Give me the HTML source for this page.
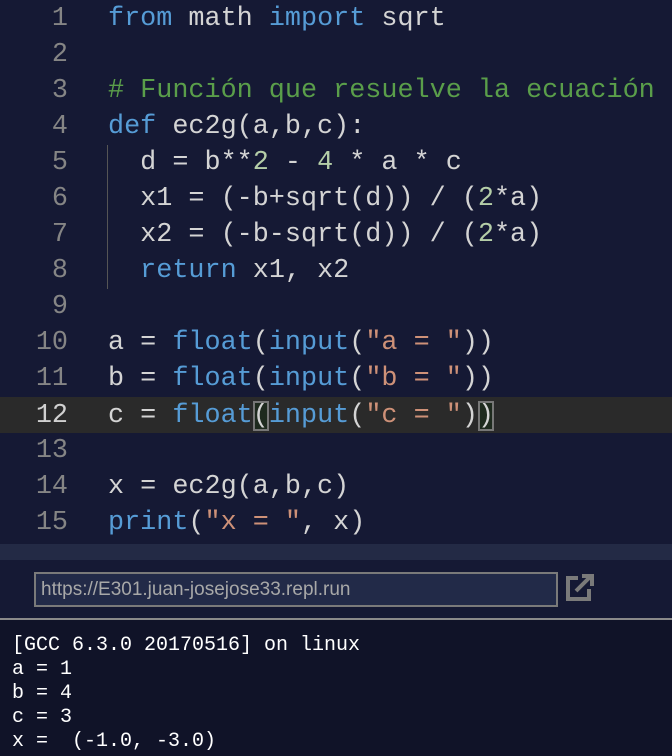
<!DOCTYPE html>
<html><head><meta charset="utf-8"><style>
body{margin:0;width:672px;height:756px;overflow:hidden;background:#101328;font-family:"Liberation Mono",monospace}
#ed{position:absolute;left:0;top:0;width:672px;height:544px;background:#151934}
.l{position:absolute;left:0;height:36px;line-height:38px;font-size:26.8px;color:#d4d4d4;white-space:pre;width:672px}
.n{position:absolute;left:0;width:68px;text-align:right;color:#858585}
.c{position:absolute;left:108px}
.k{color:#569cd6}.s{color:#ce9178}.g{color:#5a9e4a}.m{color:#b5cea8}
.hl{background:#2a2a2a}.hl .n{color:#d0d0d0}
.br{outline:2px solid #777;outline-offset:-2px;background:#1e2a1e}
#band{position:absolute;top:544px;left:0;width:672px;height:16px;background:#232a45}
#bar{position:absolute;top:560px;left:0;width:672px;height:58px;background:#151934}
#url{position:absolute;left:34px;top:572px;width:515px;height:31px;border:2px solid #7a7a7a;background:#222a48;color:#a8a8a8;font:19px "Liberation Sans",sans-serif;line-height:31px;padding-left:5px;box-sizing:content-box}
#sep{position:absolute;top:618px;left:0;width:672px;height:2px;background:#8a8a8a}
#con{position:absolute;top:634px;left:12px;color:#fff;font-size:20px;line-height:24px;white-space:pre}
#guide{position:absolute;left:107px;top:145px;width:1px;height:144px;background:#555}
</style></head><body>
<div id="ed">
<div class="l" style="top:0"><span class="n">1</span><span class="c"><span class="k">from</span> math <span class="k">import</span> sqrt</span></div>
<div class="l" style="top:36px"><span class="n">2</span></div>
<div class="l" style="top:72px"><span class="n">3</span><span class="c g"># Función que resuelve la ecuación</span></div>
<div class="l" style="top:108px"><span class="n">4</span><span class="c"><span class="k">def</span> ec2g(a,b,c):</span></div>
<div class="l" style="top:144px"><span class="n">5</span><span class="c">  d = b**<span class="m">2</span> - <span class="m">4</span> * a * c</span></div>
<div class="l" style="top:180px"><span class="n">6</span><span class="c">  x1 = (-b+sqrt(d)) / (<span class="m">2</span>*a)</span></div>
<div class="l" style="top:216px"><span class="n">7</span><span class="c">  x2 = (-b-sqrt(d)) / (<span class="m">2</span>*a)</span></div>
<div class="l" style="top:252px"><span class="n">8</span><span class="c">  <span class="k">return</span> x1, x2</span></div>
<div class="l" style="top:288px"><span class="n">9</span></div>
<div class="l" style="top:324px"><span class="n">10</span><span class="c">a = <span class="k">float</span>(<span class="k">input</span>(<span class="s">"a = "</span>))</span></div>
<div class="l" style="top:360px"><span class="n">11</span><span class="c">b = <span class="k">float</span>(<span class="k">input</span>(<span class="s">"b = "</span>))</span></div>
<div class="l hl" style="top:397px"><span class="n">12</span><span class="c">c = <span class="k">float</span><span class="br">(</span><span class="k">input</span>(<span class="s">"c = "</span>)<span class="br">)</span></span></div>
<div class="l" style="top:432px"><span class="n">13</span></div>
<div class="l" style="top:468px"><span class="n">14</span><span class="c">x = ec2g(a,b,c)</span></div>
<div class="l" style="top:504px"><span class="n">15</span><span class="c"><span class="k">print</span>(<span class="s">"x = "</span>, x)</span></div>
<div id="guide"></div>
</div>
<div id="band"></div>
<div id="bar"></div>
<div id="url">https://E301.juan-josejose33.repl.run</div>
<svg style="position:absolute;left:564px;top:573px" width="32" height="30" viewBox="0 0 32 30"><path d="M14 5H4v21h21V16" fill="none" stroke="#7a7a7a" stroke-width="4"/><path d="M12 18L26 4M18 3h10v10" fill="none" stroke="#7a7a7a" stroke-width="4"/></svg>
<div id="sep"></div>
<div id="con">[GCC 6.3.0 20170516] on linux
a = 1
b = 4
c = 3
x =  (-1.0, -3.0)</div>
</body></html>
